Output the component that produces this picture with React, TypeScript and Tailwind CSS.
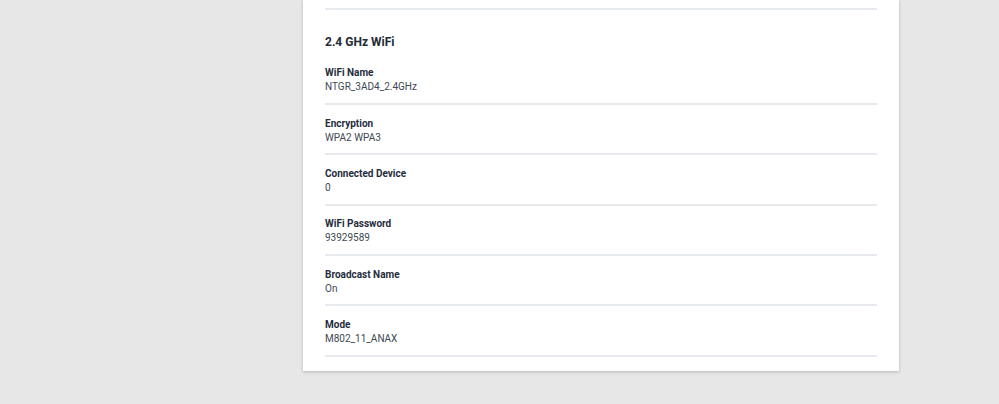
const rows = [
  { label: "WiFi Name", value: "NTGR_3AD4_2.4GHz" },
  { label: "Encryption", value: "WPA2 WPA3" },
  { label: "Connected Device", value: "0" },
  { label: "WiFi Password", value: "93929589" },
  { label: "Broadcast Name", value: "On" },
  { label: "Mode", value: "M802_11_ANAX" },
];

export default function App() {
  return (
    <div
      className="min-h-[404px] w-full bg-[#e6e7e6]"
      style={{ fontFamily: "Roboto, 'Liberation Sans', sans-serif" }}
    >
      <div className="ml-[303px] w-[596px] bg-white px-[22px] pb-[14px] pt-[8px] shadow-[0_1px_3px_rgba(0,0,0,0.22)]">
        <div className="h-[2px] bg-[#e6eaee]" />

        <h2 className="mt-[23.5px] text-[12px] font-bold leading-[16px] text-[#222b36]">
          2.4 GHz WiFi
        </h2>

        <div className="mt-[5px]">
          {rows.map((row) => (
            <div
              key={row.label}
              className="border-b-2 border-[#e6eaee] pb-[9.6px] pt-[11.8px]"
            >
              <p className="text-[10px] font-bold leading-[13px] text-[#1f2c3c]">
                {row.label}
              </p>
              <p className="mt-[1px] text-[10px] leading-[13px] text-[#404852]">
                {row.value}
              </p>
            </div>
          ))}
        </div>
      </div>
    </div>
  );
}
